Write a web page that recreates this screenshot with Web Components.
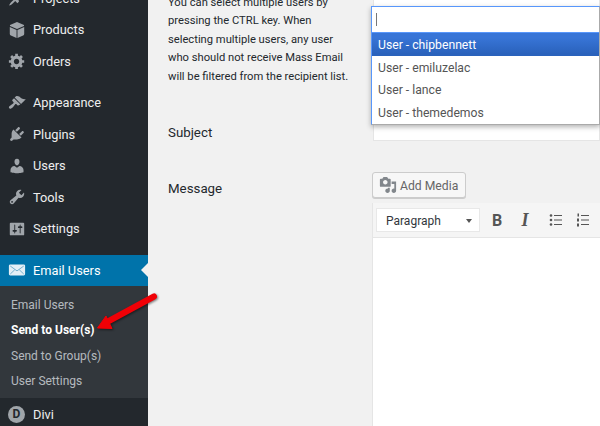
<!DOCTYPE html>
<html>
<head>
<meta charset="utf-8">
<style>
  html, body { margin: 0; height: 100%; }
  body {
    width: 600px;
    height: 426px;
    overflow: hidden;
    display: flex;
    position: relative;
    background: #f1f1f1;
    font-family: Roboto, "Open Sans", sans-serif;
  }
</style>
</head>
<body>
<wp-sidebar>
  <wp-menu-item icon="pin" label="Projects"></wp-menu-item>
  <wp-menu-item icon="box" label="Products"></wp-menu-item>
  <wp-menu-item icon="gear" label="Orders"></wp-menu-item>
  <wp-menu-gap></wp-menu-gap>
  <wp-menu-item icon="brush" label="Appearance"></wp-menu-item>
  <wp-menu-item icon="plug" label="Plugins"></wp-menu-item>
  <wp-menu-item icon="user" label="Users"></wp-menu-item>
  <wp-menu-item icon="wrench" label="Tools"></wp-menu-item>
  <wp-menu-item icon="sliders" label="Settings"></wp-menu-item>
  <wp-menu-gap></wp-menu-gap>
  <wp-menu-item icon="mail" label="Email Users" current></wp-menu-item>
  <wp-submenu>
    <wp-submenu-item>Email Users</wp-submenu-item>
    <wp-submenu-item current>Send to User(s)</wp-submenu-item>
    <wp-submenu-item>Send to Group(s)</wp-submenu-item>
    <wp-submenu-item>User Settings</wp-submenu-item>
  </wp-submenu>
  <wp-menu-item icon="divi" label="Divi"></wp-menu-item>
</wp-sidebar>

<send-form>
  <form-row slot="recipients" class="first">
    <span slot="label" class="hint">You can select multiple users by<br>pressing the CTRL key. When<br>selecting multiple users, any user<br>who should not receive Mass Email<br>will be filtered from the recipient list.</span>
    <user-select></user-select>
  </form-row>
  <form-row label="Subject" style="--row-height:56px"></form-row>
  <form-row label="Message">
    <add-media></add-media>
    <wp-editor></wp-editor>
  </form-row>
</send-form>

<callout-arrow></callout-arrow>

<script>
const ICONS = {
  pin: '<path d="M10.44 3.02l1.82-1.82 6.36 6.35-1.83 1.82c-1.05-.68-2.48-.57-3.41.36l-.75.75c-.92.93-1.04 2.35-.35 3.41l-1.83 1.82-2.41-2.41-2.8 2.79c-.42.42-3.38 2.71-3.8 2.29s1.86-3.39 2.28-3.81l2.79-2.79L4.1 9.36l1.83-1.82c1.05.69 2.48.57 3.4-.36l.75-.75c.93-.92 1.05-2.35.36-3.41z"/>',
  box: '<path d="M10 1l7.800 3.400v1.200L10 9 2.200 5.600V4.400z"/><path d="M2 6.800l7.500 3.100V19l-6.300-2.800c-.7-.3-1.200-.9-1.200-1.700z"/><path d="M18 6.800l-7.500 3.100V19l6.300-2.800c.7-.3 1.200-.9 1.200-1.700z"/>',
  gear: '<path d="M18 12h-2.180c-.17.7-.44 1.350-.81 1.930l1.540 1.540-2.100 2.100-1.540-1.540c-.58.36-1.230.63-1.910.79V19H8v-2.180c-.68-.16-1.330-.43-1.910-.79l-1.540 1.540-2.120-2.120 1.540-1.540c-.36-.58-.63-1.230-.79-1.910H1V9.030h2.170c.16-.7.44-1.350.8-1.940L2.430 5.550l2.100-2.100 1.540 1.540c.58-.37 1.240-.64 1.930-.81V2h3v2.180c.68.16 1.330.43 1.910.79l1.540-1.540 2.120 2.120-1.540 1.540c.36.59.64 1.240.8 1.940H18V12zm-8.500 1.500c1.660 0 3-1.340 3-3s-1.340-3-3-3-3 1.340-3 3 1.340 3 3 3z"/>',
  brush: '<path d="M14.48 11.06L7.41 3.99l1.5-1.5c.5-.56 2.3-.47 3.51.32 1.21.8 1.43 1.28 2.91 2.1 1.18.64 2.45 1.26 4.45.85zm-.71.71L6.7 4.7 4.93 6.47c-.39.39-.39 1.02 0 1.41l1.06 1.06c.39.39.39 1.03 0 1.42-.6.6-1.43 1.11-2.21 1.69-.35.26-.7.53-1.01.84C1.43 13.23.4 14.98 1.39 15.97c.99 1 2.75-.03 4.08-1.36.31-.31.58-.66.85-1.02.57-.78 1.08-1.61 1.69-2.21.39-.39 1.02-.39 1.41 0l1.06 1.06c.39.39 1.02.39 1.41 0z"/>',
  plug: '<path d="M13.11 4.36L9.87 7.6 8 5.73l3.24-3.24c.35-.34 1.05-.2 1.56.32.52.51.66 1.21.31 1.55zm-8 1.77l.91-1.12 9.01 9.01-1.19.84c-.71.71-2.63 1.16-3.82 1.16H6.14L4.9 17.26c-.59.59-1.54.59-2.12 0-.59-.58-.59-1.53 0-2.12l1.24-1.24v-3.88c0-1.13.4-3.19 1.09-3.89zm7.26 3.97l3.24-3.24c.34-.35 1.04-.21 1.55.31.52.51.66 1.21.31 1.55l-3.24 3.25z"/>',
  user: '<path d="M10 9.25c-2.27 0-2.73-3.44-2.73-3.44C7 4.02 7.82 2 9.97 2c2.16 0 2.98 2.02 2.71 3.81 0 0-.41 3.44-2.68 3.44zm0 2.57L12.72 10c2.39 0 4.52 2.33 4.52 4.53v2.49s-3.65 1.13-7.24 1.13c-3.65 0-7.24-1.13-7.24-1.13v-2.49c0-2.25 1.94-4.48 4.47-4.48z"/>',
  wrench: '<path d="M16.68 9.77c-1.34 1.34-3.3 1.67-4.95.99l-5.41 6.52c-.99.99-2.59.99-3.58 0s-.99-2.59 0-3.57l6.52-5.42c-.68-1.65-.35-3.61.99-4.95 1.28-1.28 3.12-1.62 4.72-1.06l-2.89 2.89 2.82 2.82 2.86-2.87c.53 1.58.18 3.39-1.08 4.65zM3.81 16.21c.4.39 1.04.39 1.43 0 .4-.4.4-1.04 0-1.43-.39-.4-1.03-.4-1.43 0-.39.39-.39 1.03 0 1.43z"/>',
  sliders: '<path d="M18 16V4c0-.55-.45-1-1-1H3c-.55 0-1 .45-1 1v12c0 .55.45 1 1 1h14c.55 0 1-.45 1-1zM8 11h1c.55 0 1 .45 1 1s-.45 1-1 1H8v1.5c0 .28-.22.5-.5.5s-.5-.22-.5-.5V13H6c-.55 0-1-.45-1-1s.45-1 1-1h1V5.5c0-.28.22-.5.5-.5s.5.22.5.5V11zm5-2h-1c-.55 0-1-.45-1-1s.45-1 1-1h1V5.5c0-.28.22-.5.5-.5s.5.22.5.5V7h1c.55 0 1 .45 1 1s-.45 1-1 1h-1v5.5c0 .28-.22.5-.5.5s-.5-.22-.5-.5V9z"/>',
  mail: '<path d="M1 5.500C1 4.700 1.700 4 2.500 4h15c.8 0 1.500.7 1.500 1.500v9c0 .8-.7 1.500-1.500 1.500h-15C1.700 16 1 15.300 1 14.500z"/><path d="M2.500 5.600L10 11l7.500-5.400M2.500 14.500l5-4.800M17.500 14.500l-5-4.800" fill="none" stroke="#6aa9ca" stroke-width="1"/>'
};

class WpSidebar extends HTMLElement {
  constructor() {
    super();
    this.attachShadow({ mode: "open" });
    this.shadowRoot.innerHTML = `
      <style>
        :host {
          display: block;
          flex: 0 0 148px;
          height: 426px;
          overflow: hidden;
          background: #23282d;
        }
        .inner { margin-top: -17.400px; }
      </style>
      <div class="inner"><slot></slot></div>
    `;
  }
}

class WpMenuItem extends HTMLElement {
  constructor() {
    super();
    this.attachShadow({ mode: "open" });
  }

  connectedCallback() {
    const icon = this.getAttribute("icon");
    const glyph = icon === "divi"
      ? '<span class="divi">D</span>'
      : `<svg viewBox="0 0 20 20" width="18" height="18">${ICONS[icon]}</svg>`;
    this.shadowRoot.innerHTML = `
      <style>
        :host {
          display: flex;
          align-items: center;
          position: relative;
          height: 31.400px;
          color: #eee;
          font-size: 12.800px;
        }
        :host([current]) { background: #0073aa; color: #fff; }
        :host([current]) svg { fill: #e4eff6; }
        :host([current])::after {
          content: "";
          position: absolute;
          right: 0;
          top: 50%;
          margin-top: -7px;
          border: 7px solid transparent;
          border-right-color: #f1f1f1;
          border-left-width: 0;
        }
        .icon { flex: 0 0 33px; display: flex; justify-content: center; }
        svg { fill: #a0a5aa; display: block; }
        .divi {
          width: 17px;
          height: 17px;
          border-radius: 50%;
          background: #a0a5aa;
          color: #23282d;
          font-weight: 700;
          font-size: 12px;
          line-height: 17px;
          text-align: center;
        }
      </style>
      <span class="icon">${glyph}</span>
      <span>${this.getAttribute("label")}</span>
    `;
  }
}

class WpMenuGap extends HTMLElement {
  constructor() {
    super();
    this.attachShadow({ mode: "open" });
    this.shadowRoot.innerHTML = `<style>:host { display: block; height: 10.500px; }</style>`;
  }
}

class WpSubmenu extends HTMLElement {
  constructor() {
    super();
    this.attachShadow({ mode: "open" });
    this.shadowRoot.innerHTML = `
      <style>
        :host {
          display: block;
          background: #32373c;
          padding: 7px 0 4px;
        }
      </style>
      <slot></slot>
    `;
  }
}

class WpSubmenuItem extends HTMLElement {
  constructor() {
    super();
    this.attachShadow({ mode: "open" });
    this.shadowRoot.innerHTML = `
      <style>
        :host {
          display: block;
          height: 25.300px;
          line-height: 25.300px;
          padding-left: 11px;
          font-size: 12px;
          color: rgba(240, 245, 250, .7);
          white-space: nowrap;
        }
        :host([current]) { color: #fff; font-weight: 700; }
      </style>
      <slot></slot>
    `;
  }
}

class SendForm extends HTMLElement {
  constructor() {
    super();
    this.attachShadow({ mode: "open" });
    this.shadowRoot.innerHTML = `
      <style>
        :host {
          display: block;
          flex: 1;
          min-width: 0;
          height: 426px;
          overflow: hidden;
          padding-left: 20px;
        }
        .inner { margin-top: -1px; }
      </style>
      <slot name="recipients"></slot>
      <div class="inner"><slot></slot></div>
    `;
  }
}

class FormRow extends HTMLElement {
  constructor() {
    super();
    this.attachShadow({ mode: "open" });
  }

  connectedCallback() {
    const label = this.getAttribute("label");
    this.shadowRoot.innerHTML = `
      <style>
        :host {
          display: grid;
          grid-template-columns: 204px 228px;
          min-height: var(--row-height, 0);
          color: #23282d;
        }
        :host(.first) { margin-top: -6px; height: 123px; }
        .label { font-size: 13.300px; line-height: 20px; padding-top: 7px; }
        :host(.first) .label { padding-top: 0; }
        ::slotted(.hint) {
          display: block;
          white-space: nowrap;
          font-size: 11.200px;
          line-height: 18.400px;
        }
      </style>
      <div class="label"><slot name="label">${label || ""}</slot></div>
      <div class="field"><slot></slot></div>
    `;
  }
}

class UserSelect extends HTMLElement {
  constructor() {
    super();
    this.attachShadow({ mode: "open" });
    this.shadowRoot.innerHTML = `
      <style>
        :host { display: block; position: relative; height: 147px; }
        .behind {
          height: 100%;
          margin-left: 1px;
          background: #fff;
          border: 1px solid #e5e5e5;
          box-sizing: border-box;
        }
        .drop {
          position: absolute;
          left: -1px;
          right: 0;
          top: 12px;
          background: #fff;
          box-shadow: 0 2px 5px rgba(0, 0, 0, .3);
          border: 1px solid #aaa;
          border-top-color: #5897fb;
          border-left-color: #5897fb;
          font-size: 12.200px;
          color: #555;
        }
        .search {
          height: 26px;
          box-sizing: border-box;
          border-bottom: 1px solid #5897fb;
          padding: 6px 0 0 4px;
        }
        .caret { display: block; width: 1px; height: 13px; background: #777; }
        .opt { height: 22.700px; line-height: 24px; padding-left: 6px; }
        .opt.on {
          background: linear-gradient(#3875d7 20%, #2a62bc 90%);
          color: #fff;
        }
      </style>
      <div class="behind"></div>
      <div class="drop">
        <div class="search"><span class="caret"></span></div>
        <div class="opt on">User - chipbennett</div>
        <div class="opt">User - emiluzelac</div>
        <div class="opt">User - lance</div>
        <div class="opt">User - themedemos</div>
      </div>
    `;
  }
}

class AddMedia extends HTMLElement {
  constructor() {
    super();
    this.attachShadow({ mode: "open" });
    this.shadowRoot.innerHTML = `
      <style>
        :host {
          display: flex;
          align-items: center;
          gap: 3px;
          width: 94px;
          height: 26px;
          box-sizing: border-box;
          padding-left: 6px;
          background: #f7f7f7;
          border: 1px solid #ccc;
          border-radius: 3px;
          box-shadow: 0 1px 0 #ccc;
          color: #666;
          font-size: 12.200px;
        }
        span { padding-top: 1px; }
        svg { fill: #82878c; display: block; }
      </style>
      <svg viewBox="0 0 20 20" width="18" height="18"><path d="M13 11V4c0-.55-.45-1-1-1h-1.670L9 1H5L3.670 3H2c-.55 0-1 .45-1 1v7c0 .55.45 1 1 1h10c.55 0 1-.45 1-1zM7 4.500c1.380 0 2.500 1.120 2.500 2.500S8.380 9.500 7 9.500 4.500 8.380 4.500 7 5.620 4.500 7 4.500zM14 6h5v10.500c0 1.380-1.120 2.500-2.500 2.500S14 17.880 14 16.500s1.120-2.500 2.500-2.500c.17 0 .34.020.5.050V9h-3V6zm-4 8.050V13h2v3.500c0 1.380-1.120 2.500-2.500 2.500S7 17.880 7 16.500 8.120 14 9.500 14c.17 0 .34.020.5.050z"/></svg>
      <span>Add Media</span>
    `;
  }
}

class WpEditor extends HTMLElement {
  constructor() {
    super();
    this.attachShadow({ mode: "open" });
    this.shadowRoot.innerHTML = `
      <style>
        :host {
          display: block;
          margin-top: 5px;
          height: 240px;
          background: #fff;
          border-left: 1px solid #e5e5e5;
        }
        .bar {
          height: 34px;
          display: flex;
          align-items: center;
          padding-left: 3px;
          background: #f5f5f5;
          border-bottom: 1px solid #e5e5e5;
          color: #555;
        }
        .format {
          flex: 0 0 104px;
          height: 24px;
          box-sizing: border-box;
          display: flex;
          align-items: center;
          justify-content: space-between;
          padding: 1px 7px 0 9px;
          margin-right: 3px;
          background: #fff;
          border: 1px solid #e8e8e8;
          font-size: 12px;
          color: #32373c;
        }
        .tri {
          width: 0;
          border: 3.500px solid transparent;
          border-top: 4px solid #555;
          border-bottom: 0;
        }
        .btn {
          flex: 0 0 28px;
          height: 23px;
          display: flex;
          align-items: center;
          justify-content: center;
          font-size: 16px;
          font-weight: 700;
        }
        .btn.i { font-style: italic; font-family: "Liberation Serif", serif; font-size: 18px; }
        .btn.ul { margin-left: 3px; }
        .btn.ol { margin-left: -1px; }
        svg { fill: #555; display: block; }
      </style>
      <div class="bar">
        <div class="format"><span>Paragraph</span><span class="tri"></span></div>
        <span class="btn b">B</span>
        <span class="btn i">I</span>
        <span class="btn ul"><svg viewBox="0 0 14 14" width="14" height="14"><circle cx="2" cy="2.500" r="1.300"/><circle cx="2" cy="7" r="1.300"/><circle cx="2" cy="11.500" r="1.300"/><rect x="5" y="2" width="8" height="1"/><rect x="5" y="6.500" width="8" height="1"/><rect x="5" y="11" width="8" height="1"/></svg></span>
        <span class="btn ol"><svg viewBox="0 0 14 14" width="14" height="14"><rect x="1.500" y="0.500" width="1.500" height="3"/><rect x="1" y="5.500" width="2" height="3"/><rect x="1" y="10.500" width="2" height="3"/><rect x="5" y="2" width="8" height="1"/><rect x="5" y="6.500" width="8" height="1"/><rect x="5" y="11" width="8" height="1"/></svg></span>
      </div>
    `;
  }
}

class CalloutArrow extends HTMLElement {
  constructor() {
    super();
    this.attachShadow({ mode: "open" });
    this.shadowRoot.innerHTML = `
      <style>
        :host { position: absolute; left: 90px; top: 285px; width: 80px; height: 55px; }
        svg { display: block; filter: drop-shadow(1px 1px 1px rgba(0, 0, 0, .5)); }
      </style>
      <svg viewBox="0 0 80 55" width="80" height="55">
        <path d="M64 11.500 L17 37" fill="none" stroke="#f00006" stroke-width="6" stroke-linecap="round"/>
        <path d="M7.500 43 L16 31 L22 43.500 Z" fill="#f00006" stroke="#f00006" stroke-width="1" stroke-linejoin="round"/>
      </svg>
    `;
  }
}

customElements.define("wp-sidebar", WpSidebar);
customElements.define("wp-menu-item", WpMenuItem);
customElements.define("wp-menu-gap", WpMenuGap);
customElements.define("wp-submenu", WpSubmenu);
customElements.define("wp-submenu-item", WpSubmenuItem);
customElements.define("send-form", SendForm);
customElements.define("form-row", FormRow);
customElements.define("user-select", UserSelect);
customElements.define("add-media", AddMedia);
customElements.define("wp-editor", WpEditor);
customElements.define("callout-arrow", CalloutArrow);
</script>
</body>
</html>
